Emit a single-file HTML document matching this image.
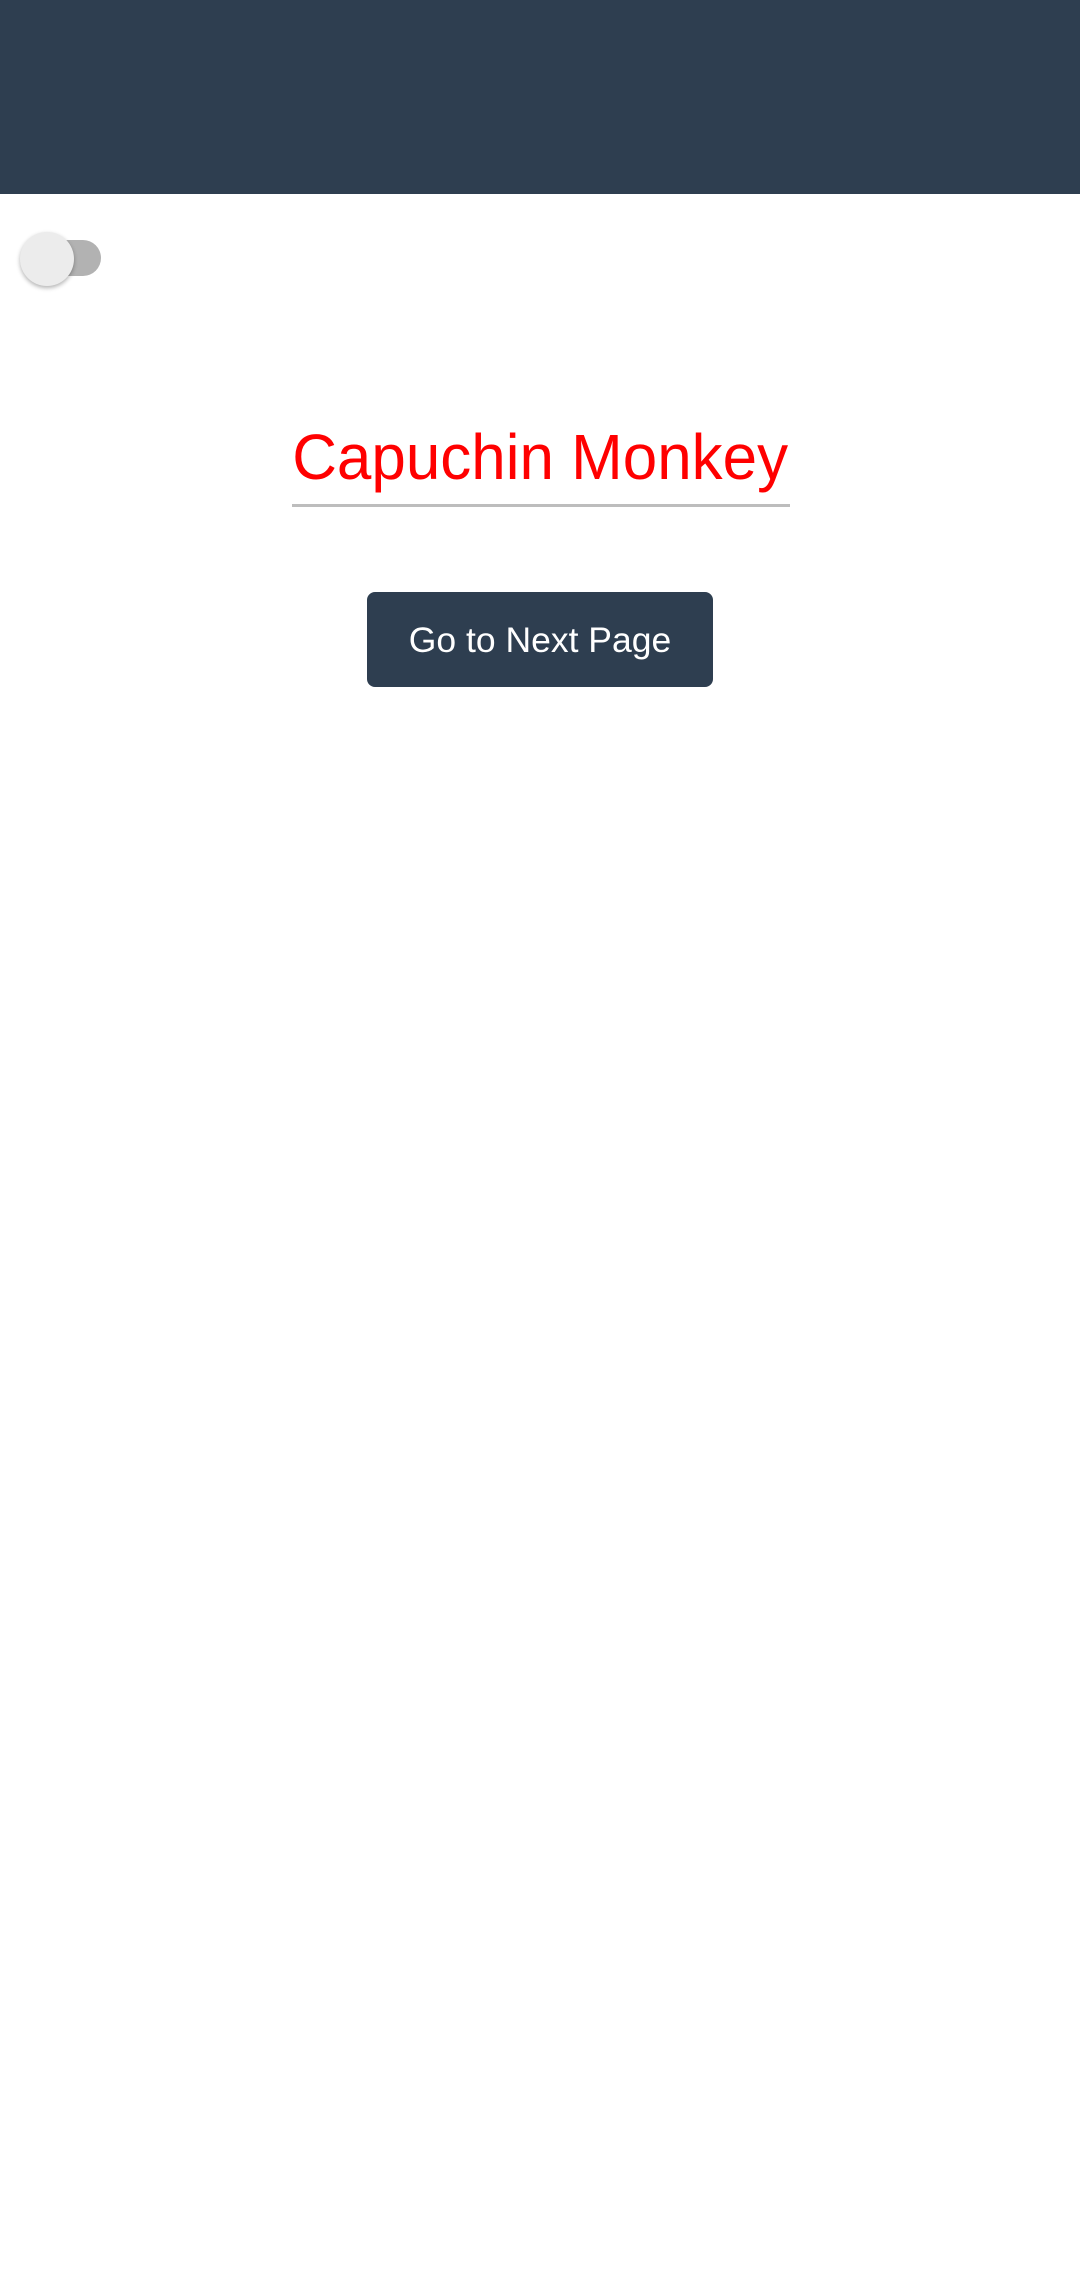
<!DOCTYPE html>
<html><head><meta charset="utf-8"><style>
html,body{margin:0;padding:0;width:1080px;height:2289px;background:#fff;overflow:hidden;font-family:"Liberation Sans",sans-serif;}
.hdr{position:absolute;left:0;top:0;width:1080px;height:194px;background:#2e3e50;}
.track{position:absolute;left:50px;top:240px;width:51px;height:36px;border-radius:18px;background:#b2b2b2;}
.thumb{position:absolute;left:20px;top:232px;width:54px;height:54px;border-radius:50%;background:#ececec;box-shadow:0 2px 4px rgba(0,0,0,0.3);}
.title{position:absolute;left:292px;top:412px;width:498px;height:92px;border-bottom:3px solid #bdbdbd;color:#ff0000;font-size:64px;line-height:90px;text-align:center;white-space:nowrap;}
.title span{display:inline-block;position:relative;left:-8px;transform:scaleX(0.968);transform-origin:center;}
.btn{position:absolute;left:367px;top:592px;width:346px;height:95px;border-radius:8px;background:#2e3e50;color:#fff;font-size:35.5px;line-height:97px;text-align:center;}
</style></head><body>
<div class="hdr"></div>
<div class="track"></div>
<div class="thumb"></div>
<div class="title"><span>Capuchin Monkey</span></div>
<div class="btn">Go to Next Page</div>
</body></html>
